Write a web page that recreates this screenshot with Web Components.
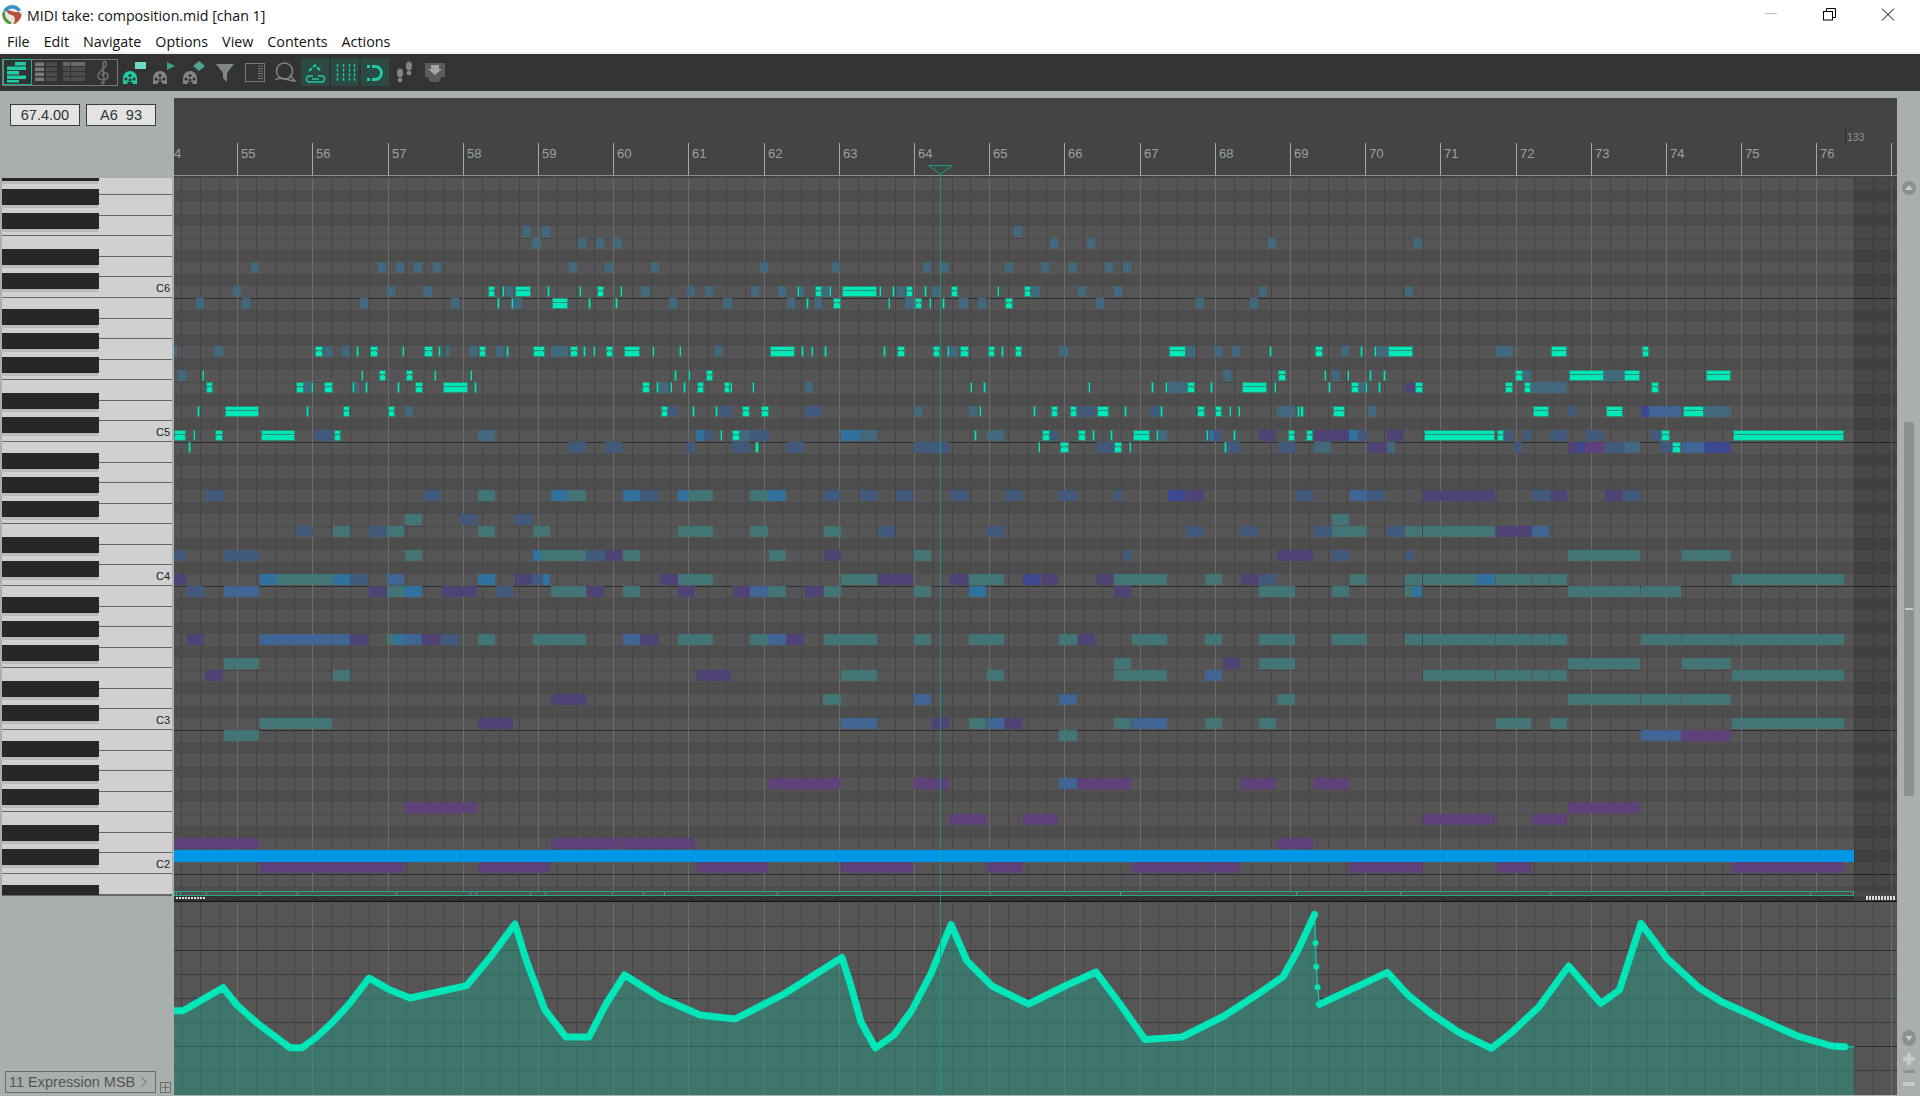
<!DOCTYPE html>
<html>
<head>
<meta charset="utf-8">
<title>MIDI take: composition.mid [chan 1]</title>
<style>
    html, body { margin: 0; background: #a9aeae; }
</style>
</head>
<body>
<midi-window></midi-window>

<script>
const UI_FONT = `"Open Sans", "Noto Sans", sans-serif`
const LABEL_FONT = `"Liberation Sans", Arial, sans-serif`

const MEASURE_0 = 237.3
const MEASURE_W = 75.19
const ROW_H = 12
const ITEM_END = 1854
const CANVAS_END = 1897

const measureX = (m) => MEASURE_0 + MEASURE_W * (m - 55)
const rowY = (r) => 286 + ROW_H * r
const isBlackRow = (r) => [2, 4, 6, 9, 11].includes(((r % 12) + 12) % 12)

const NOTE_COLORS = {
    a: "#3f6a82",
    t: "#41797b",
    b: "#3f5b80",
    B: "#3e669a",
    p: "#4f417a",
    P: "#5f3f7c",
    c: "#2c74a6",
    d: "#3a4898",
}

// Notes per row (0 = the C6 row). Spans are measured at the given x origin and scale.
const NOTE_BLOCKS = [
    { x: 170, sx: 2.8, color: "S", rows: {
        0: "889-911 929-935 966-1012 1056-1064 1145-1151 1195-1216 1260-1266",
        1: "915-925 955-960 1069-1115 1170-1180 1245-1254",
        5: "405-427 520-530 559-581 650-656 710-735 750-759 864-886 941-949 1015-1051 1119-1141 1155-1165 1184-1190 1220-1241 1270-1317 1350-1355 1425-1431",
        7: "89-95 535-540 584-606 660-681 739-745 840-846 1410-1420 1450-1456 1500-1521",
        8: "100-121 354-376 395-400 430-455 510-516 545-554 636-644 685-707 763-835 850-860 1321-1345 1360-1369 1400-1406 1436-1445 1475-1496 1550-1568",
        10: "76-85 153-250 380-389 483-505 609-631 1374-1395 1462-1470 1526-1534",
        12: "10-46 64-70 125-149 255-351 458-480 1540-1546",
        13: "50-60",
    } },
    { x: 170, sx: 2.8, color: "a", rows: {
        "-5": "988-1011 1041-1064",
        "-4": "1014-1040 1141-1165 1193-1216 1242-1266",
        "-2": "227-250 582-606 633-656 683-706 735-759 1117-1139 1218-1241 1347-1370",
        0: "176-199 608-630 708-734 937-960 1319-1345 1447-1470 1498-1520",
        1: "73-96 201-224 532-555 787-809 960-986 1397-1420 1547-1568",
        5: "10-20 124-149 430-454 481-505 770-784 837-860 913-936 1067-1115 1525-1546",
        7: "22-46",
        8: "376-395 516-530 1370-1394",
        10: "658-680 b1395-1420 b1538-1568",
        12: "b404-454 862-910 c1473-1496 b1496-1520",
        13: "b1117-1165 b1218-1266 b1447-1469",
    } },
    { x: 730, sx: 2.75, color: "S", rows: {
        0: "184-190 233-254 272-278 308-404 410-415 446-454 483-504 534-542 607-628 734-740 808-829",
        1: "208-217 282-304 434-440 508-529 546-553 583-592 757-779",
        5: "109-180 195-204 223-229 258-267 421-429 458-480 557-578 597-603 632-656 709-730 745-754 783-804 1207-1254 1483-1491",
        7: "1507-1530",
        8: "0-5 60-66 660-666 696-704 985-991 1158-1166 1196-1202 1258-1280 1320-1329 1407-1478 1496-1502",
        10: "32-56 84-106 685-690 834-842 882-903 934-955 1009-1041 1084-1092 1183-1191 1284-1305 1333-1354 1373-1378 1397-1403 1560-1568",
        12: "6-28 671-679 857-879 958-980 995-1003 1045-1053 1108-1154 1171-1177 1308-1314 1384-1392 1534-1555",
        13: "70-80 846-853 907-931 1057-1079 1097-1103 1358-1366",
    } },
    { x: 730, sx: 2.75, color: "a", rows: {
        "-5": "781-803",
        "-4": "880-902 982-1004 1480-1502",
        "-2": "83-105 281-303 531-553 578-602 756-778 856-878 933-955 1032-1054 1081-1103",
        0: "58-80 132-154 190-204 254-272 458-480 556-579 829-853 957-979 1056-1078 1455-1477",
        1: "0-3 157-179 231-253 480-505 630-655 682-704 1007-1029 1282-1304 1430-1452",
        5: "603-627 905-930 1256-1280 1332-1354 1380-1403",
        7: "1356-1378",
        8: "206-228 1202-1256",
        10: "b0-3 b206-253 506-528 657-680 b957-1005 b1156-1183 1505-1555",
        12: "28-55 b55-106 c306-355 355-403 707-754 b879-902 1177-1201 c1316-1330 b1330-1354 p1455-1502",
        13: "b5-55 b157-204 b506-602 b1008-1057 b1370-1403 b1506-1553",
    } },
    { x: 1300, sx: 2.75, color: "S", rows: {
        5: "40-62 165-173 204-210 241-311 690-735 940-961",
        7: "65-72 129-135 190-198 228-237 590-612 739-836 890-936 1116-1186",
        8: "77-85 139-161 179-184 215-223 315-337 565-587 615-636 966-988",
        10: "0-12 90-125 640-686 841-887 1053-1112",
        12: "16-37 340-537 541-562 992-1018 1190-1497",
        13: "1022-1049",
    } },
    { x: 1300, sx: 2.75, color: "a", rows: {
        "-4": "314-336",
        0: "290-311",
        5: "113-135 210-241 540-586",
        7: "87-110 612-635 836-890",
        8: "161-179 p290-315 636-733",
        10: "187-209 b738-760 d938-960 B960-1048 1112-1186",
        12: "p38-135 c135-160 b160-183 p240-285 b563-586 b613-636 b687-733 b787-836 b964-992",
        13: "38-85 p187-238 238-261 b590-611 p738-762 d762-785 P785-836 b838-890 890-935 b990-1022 B1050-1112 d1112-1186",
    } },
    { x: 170, sx: 2.24, color: "t", rows: {
        17: "b78-120 b568-608 690-728 c853-892 892-932 c1015-1053 b1053-1095 c1138-1158 1158-1216 1300-1340 c1340-1380 b1464-1502",
        19: "526-564 b650-688 b772-810",
        20: "b282-320 365-403 b446-485 486-524 690-728 812-851 1138-1216 1300-1340 1464-1502",
        22: "b8-36 b122-200 526-564 c812-830 830-932 b932-974 p974-1013 1015-1053 1342-1380 p1464-1502",
        24: "p8-36 c202-240 240-365 c365-404 b404-444 B486-524 c690-728 p772-811 b811-835 c835-851 p1098-1137 1138-1216 1502-1545",
        25: "b38-76 B122-200 p446-485 486-525 c525-564 p610-688 b730-768 853-932 p933-972 1015-1053 p1138-1176 p1260-1300 B1300-1340 1340-1380 p1422-1462 1464-1502",
        29: "p38-76 B202-362 B365-404 p404-444 486-505 c505-525 B525-564 p564-608 b610-648 690-728 812-932 B1015-1053 p1053-1095 1138-1216 1300-1340 B1340-1380 p1380-1420 1464-1545",
        31: "122-200",
        32: "p78-119 365-403 p1178-1257 1503-1545",
        34: "p853-932 1463-1502",
        36: "202-362 p690-768 B1503-1545",
        37: "122-200",
        41: "P1342-1502",
        43: "P526-688",
        46: "P8-200 P853-1012 P1015-1175",
        48: "P202-524 P690-851 P1178-1340 P1503-1545",
    } },
    { x: 860, sx: 3, color: "t", rows: {
        17: "b0-52 b108-160 b270-324 b436-486 b598-652 b762-786 d924-978 p981-1032 b1308-1360 B1470-1522 b1522-1530",
        19: "1416-1468",
        20: "b53-106 b381-432 b981-1032 b1144-1194 b1362-1416 1416-1522",
        22: "162-213 b789-813 p1251-1359 b1416-1468",
        24: "0-52 p53-160 p270-324 327-432 d490-540 p543-594 p708-760 762-922 1035-1086 p1144-1194 b1197-1248 1470-1522",
        25: "162-213 c327-378 p762-813 1197-1305 1416-1468",
        29: "0-52 162-213 327-432 598-652 p653-705 816-921 1035-1086 1197-1305 1416-1522",
        31: "762-813 p1090-1140 1197-1305",
        32: "0-52 381-432 762-922 B1035-1086",
        34: "B162-213 B598-652 1251-1305",
        36: "B0-52 p216-267 327-378 B381-432 p436-486 762-813 B816-921 1035-1086 1197-1248",
        37: "598-652",
        41: "P162-267 B598-652 P652-813 P1144-1248 P1362-1468",
        44: "P270-378 P490-594",
        46: "P1251-1359",
        48: "P0-160 P381-486 P816-1032 P1035-1140 P1470-1530",
    } },
    { x: 1370, sx: 3, color: "t", rows: {
        17: "b0-46 p160-375 b486-540 p540-591 p705-756 b760-810",
        20: "b52-103 105-156 160-375 p378-486 B486-537",
        22: "b106-130 594-810 936-1083",
        24: "105-156 160-322 c322-375 378-483 486-537 540-591 1086-1422",
        25: "105-130 c130-156 594-810 813-933",
        29: "105-156 160-375 378-483 486-537 540-591 813-933 936-1083 1086-1422",
        31: "594-810 936-1083",
        32: "160-375 378-483 486-537 540-591 1086-1422",
        34: "594-810 813-933 936-1083",
        36: "378-483 540-591 1086-1422",
        37: "B813-933 P933-1083",
        43: "P594-810",
        44: "P160-375 P486-591",
        48: "P0-156 P378-483 P1086-1422",
    } },
]

const CC_RISE = [
    [174, 1010.7], [183, 1010.7], [223, 987.7], [237, 1005], [257, 1023], [290, 1047.7], [302, 1047.7],
    [317, 1036.7], [333, 1021.7], [350, 1003], [369, 978], [390, 990], [410, 998], [466.5, 985.7], [490, 957.6], [515, 924],
    [526.5, 961], [545, 1010], [566, 1037], [589, 1037], [606, 1004], [624.5, 975], [661, 998], [700, 1015], [735, 1019],
    [784, 994], [842, 957.5], [851, 986], [861, 1022], [875.5, 1048], [894, 1035], [912, 1010], [931, 973.5], [951, 924.5],
    [967, 961], [992, 986], [1028.5, 1004], [1065, 986], [1096, 972], [1120, 1004], [1145, 1039.6], [1182, 1037], [1224, 1016],
    [1261, 992], [1283, 976.7], [1298, 950], [1314.6, 914.3],
]
const CC_DROP = [[1314.6, 914.3], [1315.5, 943], [1316.3, 966.7], [1317.6, 987.3], [1319.4, 1004.3]]
const CC_FALL = [
    [1319.4, 1004.3], [1387.4, 972.3], [1408, 995], [1430.8, 1013.3], [1460, 1033], [1491.5, 1048.3], [1511, 1033], [1539, 1006.7],
    [1568.7, 966], [1600.8, 1003.3], [1619.4, 990], [1641, 923.3], [1667, 958.3], [1699.7, 988.3], [1722, 1002],
    [1747.3, 1013.3], [1775, 1026], [1799.4, 1036.7], [1832, 1046], [1845, 1046.7],
]

const pts = (list) => list.map((p) => p.join(",")).join(" ")

function beatLines(top, bottom) {
    let out = ""
    for (let x = MEASURE_0 - MEASURE_W; x < CANVAS_END; x += MEASURE_W / 4) {
        const beat = Math.round((x - MEASURE_0) / (MEASURE_W / 4))
        const left = Math.round(x)
        if (left < 174) continue
        const strong = ((beat % 4) + 4) % 4 == 0
        out += `<rect x="${left}" y="${top}" width="1" height="${bottom - top}" fill="${strong ? "#6c6c6c" : "#454545"}"/>`
    }
    return out
}

function noteRect(x0, x1, row, color) {
    const y = rowY(row)
    const w = Math.max(x1 - x0, 2)
    if (color != "S") {
        return `<rect x="${x0}" y="${y}" width="${w}" height="11" fill="${NOTE_COLORS[color]}" opacity=".9"/>`
    }
    let out = `<rect x="${x0}" y="${y}" width="${w}" height="11" fill="#2d8a78"/>`
    out += `<rect x="${x0 + 1}" y="${y + 1}" width="${Math.max(w - 2, 1)}" height="9" fill="#00e8b8"/>`
    if (w > 5) {
        out += `<rect x="${x0 + 1}" y="${y + 4}" width="${w - 2}" height="1" fill="#2d8a78"/>`
        if (w < 14) {
            out += `<rect x="${x0 + 1}" y="${y + 5}" width="1" height="1" fill="#2d8a78"/>`
            out += `<rect x="${x0 + w - 2}" y="${y + 5}" width="1" height="1" fill="#2d8a78"/>`
        }
    }
    return out
}

function notesSvg() {
    let faded = ""
    let selected = ""
    for (const block of NOTE_BLOCKS) {
        for (const [row, spans] of Object.entries(block.rows)) {
            for (const m of spans.matchAll(/([a-zA-Z])?(\d+)-(\d+)/g)) {
                const x0 = Math.round(block.x + Number(m[2]) / block.sx)
                const x1 = Math.round(block.x + Number(m[3]) / block.sx)
                const color = m[1] || block.color
                if (color == "S") selected += noteRect(x0, x1, Number(row), color)
                else faded += noteRect(x0, x1, Number(row), color)
            }
        }
    }
    return faded + selected
}

class MidiWindow extends HTMLElement {
    constructor() {
        super()
        this.attachShadow({ mode: "open" })
        this.shadowRoot.innerHTML = `
            <style>
                :host { display: flex; flex-direction: column; width: 1920px; height: 1096px; overflow: hidden; background: #a9aeae; }
            </style>
            <title-bar>MIDI take: composition.mid [chan 1]</title-bar>
            <menu-bar></menu-bar>
            <tool-strip></tool-strip>
            <editor-body></editor-body>
        `
    }
}

class TitleBar extends HTMLElement {
    constructor() {
        super()
        this.attachShadow({ mode: "open" })
        this.shadowRoot.innerHTML = `
            <style>
                :host { display: flex; align-items: center; height: 30px; background: #fff; color: #111; font: 14.2px ${UI_FONT}; }
                .logo { margin: -2px 5px 0 2px; flex: none; }
                .title { flex: 1; white-space: nowrap; }
                .controls { display: flex; }
                .controls svg { display: block; width: 58px; height: 30px; }
            </style>
            <svg class="logo" width="20" height="20" viewBox="1 4.5 18 18">
                <circle cx="10" cy="13.5" r="9" fill="#e9e4dc"/>
                <path d="M2 11 A9 9 0 0 1 18 10 L15.5 11 A7 7 0 0 0 4.5 11.5 Z" fill="#2f8fd0"/>
                <path d="M1.2 14 A9 9 0 0 0 9 23 L9.5 21 C5 19 3 15 4 12 L1.6 11.5 Z" fill="#4f9a45"/>
                <path d="M5 10 C9 10 11 13 16 11.5 L18.6 14 C18 18 15 22 11 23 C13.5 19 13 15 9.5 14.5 C7 14 5.5 12 5 10 Z" fill="#b4503f"/>
            </svg>
            <span class="title"><slot></slot></span>
            <div class="controls">
                <svg viewBox="0 0 58 30"><rect x="19" y="13" width="12" height="1" fill="#bcbcbc"/></svg>
                <svg viewBox="0 0 58 30" fill="none" stroke="#000"><rect x="19.5" y="11.5" width="9" height="8.5"/><path d="M22.5 11.5 V8.5 H31.5 V17.5 H28.5"/></svg>
                <svg viewBox="0 0 58 30" fill="none" stroke="#000"><path d="M20 8.5 L32 20.5 M32 8.5 L20 20.5"/></svg>
            </div>
        `
    }
}

class MenuBar extends HTMLElement {
    constructor() {
        super()
        this.attachShadow({ mode: "open" })
        const items = ["File", "Edit", "Navigate", "Options", "View", "Contents", "Actions"]
        this.shadowRoot.innerHTML = `
            <style>
                :host { display: flex; align-items: center; gap: 14px; height: 22px; padding-left: 7px; background: #fff; color: #111; font: 14.3px ${UI_FONT}; border-bottom: 2px solid #f0f0f0; }
            </style>
            ${items.map((item) => `<span>${item}</span>`).join("")}
        `
    }
}

const DIN = (fill) => `
    <path d="M3 26 V20 A7 7 0 0 1 17 20 V26 H12.5 V24 H7.5 V26 Z" fill="${fill}"/>
    <g fill="#333"><circle cx="6" cy="21" r="1.6"/><circle cx="14" cy="21" r="1.6"/><circle cx="10" cy="17.5" r="1.6"/><circle cx="10" cy="22" r="1.6"/></g>`
const TEAL = "#1ecba4"
const GRAY = "#7f8886"

const ICONS = {
    notes: `<g fill="${TEAL}">
        <rect x="12" y="3" width="11" height="3.5"/><rect x="4" y="7.5" width="19" height="3.5"/>
        <rect x="4" y="12" width="12" height="3.5"/><rect x="4" y="16.5" width="19" height="3.5"/><rect x="4" y="21" width="12" height="2.5"/></g>`,
    named: [3, 8, 13, 18].map((y) => `<rect x="3" y="${y + 0.5}" width="9" height="3.5" fill="#7a7a7a"/><rect x="14" y="${y + 0.5}" width="11" height="3.5" fill="#4c4c4c"/>`).join(""),
    events: [3, 8, 13, 18].map((y, i) => [3, 11, 18].map((x) => `<rect x="${x}" y="${y}" width="7" height="4" fill="${i == 0 ? "#6a6a6a" : "#4c4c4c"}"/>`).join("")).join(""),
    clef: `<path d="M15 24 L14 5 C14 1 18 2 17 6 C16 10 9 12 9 17 C9 22 19 22 19 17 C19 13 13 13 13 17" fill="none" stroke="#6d6d6d" stroke-width="1.6"/><circle cx="13.5" cy="24" r="1.6" fill="#6d6d6d"/>`,
    dinRect: `${DIN(TEAL)}<rect x="15" y="4" width="11" height="7" fill="#6edac8"/>`,
    dinPlay: `${DIN(GRAY)}<path d="M17 4 L25 8 L17 12 Z" fill="#3f9c8a"/>`,
    dinDiamond: `${DIN(GRAY)}<path d="M19 3 L25 8 L19 13 L13 8 Z" fill="#4fa392"/>`,
    filter: `<path d="M6 6 H24 L17 15 V24 L13 20 V15 Z" fill="${GRAY}"/>`,
    lanes: `<rect x="5.5" y="5.5" width="19" height="18" fill="none" stroke="#777"/><path d="M18 8 H23 M18 10.5 H23 M18 13 H23 M18 15.5 H23 M18 18 H23 M18 20.5 H23" stroke="#777"/>`,
    quantize: `<circle cx="14.5" cy="13" r="8" fill="none" stroke="${GRAY}" stroke-width="1.5"/><path d="M5 22 C10 18 16 22 25 23 L20 17" fill="none" stroke="${GRAY}" stroke-width="1.4"/>`,
    link: `<path d="M9 13 L15 7.5 L21 13" fill="none" stroke="${TEAL}" stroke-width="2.2" stroke-dasharray="4 1.5"/>
        <path d="M13 18 H9.5 A3 3 0 0 0 9.5 24 H21.5 A3 3 0 0 0 21.5 18 H18 M12 21 H19" fill="none" stroke="${TEAL}" stroke-width="1.3"/>`,
    gridDots: `<path d="M7.5 6 V23 M13.5 6 V23 M19.5 6 V23 M24.5 6 V23" fill="none" stroke="${TEAL}" stroke-width="1.4" stroke-dasharray="3 1.6"/>`,
    snap: `<path d="M12 8.5 H15 A6.5 6.5 0 0 1 15 21.5 H12" fill="none" stroke="${TEAL}" stroke-width="3"/><rect x="7" y="7" width="3" height="3" fill="${TEAL}"/><rect x="7" y="20" width="3" height="3" fill="${TEAL}"/>`,
    steps: `<g fill="${GRAY}"><ellipse cx="10" cy="15" rx="3" ry="4.6"/><ellipse cx="10" cy="22" rx="2.4" ry="2.2"/><ellipse cx="19" cy="8" rx="3" ry="4.6"/><ellipse cx="19" cy="15" rx="2.4" ry="2.2"/></g>`,
    dropIn: `<path d="M5 5 H25 V19 L21 19 L19 24 H10 L8 19 H5 Z" fill="#5c5c5c"/><path d="M11 7 H19 V11 H22 L15 17 L8 11 H11 Z" fill="#a0a6a4"/>`,
}

class ToolButton extends HTMLElement {
    constructor() {
        super()
        this.attachShadow({ mode: "open" })
        const active = this.hasAttribute("active")
        const grouped = this.hasAttribute("grouped")
        const icon = ICONS[this.getAttribute("icon") || ""] || ""
        const w = grouped ? 28.5 : 30
        const h = grouped ? 26 : 28
        this.shadowRoot.innerHTML = `
            <style>
                :host { display: block; width: ${w}px; height: ${h}px; flex: none; box-sizing: border-box; }
                svg { display: block; overflow: visible; }
            </style>
            <svg width="${w}" height="${h}" viewBox="0 0 ${w} ${h}">
                ${active ? `<rect x="1" width="28" height="28" fill="#2c4a44"/>` : ""}
                ${icon}
            </svg>
        `
    }
}

class ToolStrip extends HTMLElement {
    constructor() {
        super()
        this.attachShadow({ mode: "open" })
        this.shadowRoot.innerHTML = `
            <style>
                :host { display: flex; align-items: flex-start; height: 33px; padding: 4px 0 0 2px; background: #333; flex: none; }
                .group { display: flex; margin: 1px 2px 0 0; border: 1px solid #777; height: 24.5px; position: relative; }
                .group tool-button:first-child { outline: 1px solid #1db394; outline-offset: -1px; }
                .group tool-button { margin-top: -0.75px; }
            </style>
            <div class="group">
                <tool-button grouped icon="notes"></tool-button>
                <tool-button grouped icon="named"></tool-button>
                <tool-button grouped icon="events"></tool-button>
                <tool-button grouped icon="clef"></tool-button>
            </div>
            <tool-button icon="dinRect"></tool-button>
            <tool-button icon="dinPlay"></tool-button>
            <tool-button icon="dinDiamond"></tool-button>
            <tool-button icon="filter"></tool-button>
            <tool-button icon="lanes"></tool-button>
            <tool-button icon="quantize"></tool-button>
            <tool-button icon="link" active></tool-button>
            <tool-button icon="gridDots" active></tool-button>
            <tool-button icon="snap" active></tool-button>
            <tool-button icon="steps"></tool-button>
            <tool-button icon="dropIn"></tool-button>
        `
    }
}

class EditorBody extends HTMLElement {
    constructor() {
        super()
        this.attachShadow({ mode: "open" })
        this.shadowRoot.innerHTML = `
            <style>
                :host {
                    display: grid;
                    position: relative;
                    grid-template-columns: 174px 1723px 23px;
                    grid-template-rows: 87px 718px 6px 193px 1px;
                    flex: none;
                }
                .readouts { display: flex; gap: 6px; padding: 13px 0 0 10px; align-items: flex-start; }
                time-ruler { grid-column: 2; grid-row: 1; }
                piano-keys { grid-column: 1; grid-row: 2; }
                note-grid { grid-column: 2; grid-row: 2; }
                lane-divider { grid-column: 2; grid-row: 3; }
                cc-lane { grid-column: 2; grid-row: 4; }
                cc-selector { grid-column: 1; grid-row: 3 / 5; }
                scroll-rail { grid-column: 3; grid-row: 1 / 6; }
                play-cursor { position: absolute; left: 928px; top: 74px; }
            </style>
            <div class="readouts">
                <position-box>67.4.00</position-box>
                <position-box>A6&nbsp;&nbsp;93</position-box>
            </div>
            <time-ruler></time-ruler>
            <piano-keys></piano-keys>
            <note-grid></note-grid>
            <lane-divider></lane-divider>
            <cc-selector>11 Expression MSB</cc-selector>
            <cc-lane></cc-lane>
            <scroll-rail></scroll-rail>
            <play-cursor></play-cursor>
        `
    }
}

class PositionBox extends HTMLElement {
    constructor() {
        super()
        this.attachShadow({ mode: "open" })
        this.shadowRoot.innerHTML = `
            <style>
                :host { display: flex; align-items: center; justify-content: center; width: 70px; height: 22px; box-sizing: border-box; background: #e2e4e4; border: 1px solid #3c3c3c; color: #333; font: 14.5px ${LABEL_FONT}; white-space: nowrap; }
            </style>
            <slot></slot>
        `
    }
}

class TimeRuler extends HTMLElement {
    constructor() {
        super()
        this.attachShadow({ mode: "open" })
        let marks = `<text x="174" y="158" class="bar">4</text>`
        for (let m = 55; m <= 77; m++) {
            const x = Math.round(measureX(m))
            marks += `<rect x="${x}" y="143" width="1" height="32" fill="#a8a8a8"/>`
            if (m < 77) marks += `<text x="${x + 4}" y="158" class="bar">${m}</text>`
        }
        this.shadowRoot.innerHTML = `
            <style>
                :host { display: block; margin-top: 7px; height: 80px; background: #444; overflow: hidden; }
                svg { display: block; }
                .bar { font: 13px ${LABEL_FONT}; fill: #9aa2a2; }
                .tempo { font: 10.5px ${LABEL_FONT}; fill: #8d9595; }
            </style>
            <svg width="1723" height="80" viewBox="174 98 1723 80">
                ${marks}
                <rect x="174" y="175" width="1723" height="1" fill="#8f8f8f"/>
                <rect x="1845" y="128" width="1" height="16" fill="#2e2e2e"/>
                <text x="1847" y="141" class="tempo">133</text>
            </svg>
        `
    }
}

class PianoKeys extends HTMLElement {
    constructor() {
        super()
        this.attachShadow({ mode: "open" })
        let lines = ""
        const whiteKey = 144 / 7
        for (let i = -6; i < 36; i++) {
            const y = Math.round(297 + i * whiteKey)
            if (y >= 178 && y < 895) lines += `<rect x="2" y="${y}" width="170" height="1" fill="#666"/>`
        }
        let keys = ""
        for (let r = -10; r < 52; r++) {
            if (!isBlackRow(r)) continue
            keys += `<rect x="2" y="${rowY(r) + 15}" width="96" height="3" fill="#bbb"/>`
            keys += `<rect x="2" y="${rowY(r) - 1}" width="97" height="16" fill="#262827"/>`
        }
        const labels = [6, 5, 4, 3, 2].map((oct, i) => `<text x="170" y="${292 + 144 * i}" text-anchor="end">C${oct}</text>`).join("")
        this.shadowRoot.innerHTML = `
            <style>
                :host { display: block; height: 718px; overflow: hidden; }
                svg { display: block; }
                text { font: 11px ${LABEL_FONT}; fill: #222; }
            </style>
            <svg width="172" height="718" viewBox="0 178 172 718">
                <rect x="2" y="178" width="170" height="718" fill="#d0d0d0"/>
                ${lines}
                ${keys}
                <rect x="2" y="895" width="170" height="1" fill="#666"/>
                ${labels}
            </svg>
        `
    }
}

class NoteGrid extends HTMLElement {
    constructor() {
        super()
        this.attachShadow({ mode: "open" })
        let bands = ""
        for (let r = -9; r < 51; r++) {
            const y = rowY(r)
            if (y >= 891) break
            const h = Math.min(ROW_H, 891 - y)
            bands += `<rect x="174" y="${y}" width="1723" height="${h}" fill="${isBlackRow(r) ? "#4d4d4d" : "#555"}"/>`
        }
        let rules = ""
        for (let i = 0; i < 5; i++) {
            rules += `<rect x="174" y="${298 + 144 * i}" width="1723" height="1" fill="#2c2c2c"/>`
            rules += `<rect x="174" y="${238 + 144 * i}" width="1723" height="1" fill="#484848"/>`
        }
        let boxTicks = ""
        for (const x of [176, 180, 206, 259, 297, 396, 470, 476, 530, 545, 612, 643, 664, 777, 990, 1120, 1296, 1400, 1550, 1702, 1810]) {
            boxTicks += `<rect x="${x}" y="892" width="1" height="3" fill="#2fa68a"/>`
        }
        this.shadowRoot.innerHTML = `
            <style>
                :host { display: block; height: 718px; overflow: hidden; }
                svg { display: block; }
            </style>
            <svg width="1723" height="718" viewBox="174 178 1723 718" shape-rendering="crispEdges">
                <rect x="174" y="176" width="1723" height="720" fill="#484848"/>
                ${bands}
                ${rules}
                ${beatLines(178, 891)}
                ${notesSvg()}
                <rect x="174" y="850" width="${ITEM_END - 174}" height="12" fill="#0096e6"/>
                <rect x="${ITEM_END}" y="178" width="${CANVAS_END - ITEM_END}" height="713" fill="#000" opacity=".16"/>
                <rect x="174" y="891" width="${ITEM_END - 174}" height="5" fill="#2fa68a"/>
                <rect x="175" y="892" width="${ITEM_END - 176}" height="3" fill="#4e4e4e"/>
                ${boxTicks}
            </svg>
        `
    }
}

class LaneDivider extends HTMLElement {
    constructor() {
        super()
        this.attachShadow({ mode: "open" })
        const dots = (x0, y, n) => Array.from({ length: n }, (_, i) => `<rect x="${x0 + i * 3}" y="${y}" width="2" height="2" fill="#ddd"/>`).join("")
        this.shadowRoot.innerHTML = `
            <style>
                :host { display: block; height: 6px; overflow: hidden; background: #333; }
                svg { display: block; overflow: visible; }
            </style>
            <svg width="1723" height="6" viewBox="174 896 1723 6" shape-rendering="crispEdges">
                ${dots(176, 897, 10)}
                <rect x="1854" y="896" width="43" height="5" fill="#3f3f3f"/>
                ${dots(1866, 896, 10)}
                ${dots(1866, 898, 10)}
                <rect x="174" y="901" width="1723" height="1" fill="#111"/>
            </svg>
        `
    }
}

class CcLane extends HTMLElement {
    constructor() {
        super()
        this.attachShadow({ mode: "open" })
        const fillPoints = [...CC_RISE, ...CC_DROP.slice(1), ...CC_FALL.slice(1), [ITEM_END, 1046.7], [ITEM_END, 1095], [174, 1095]]
        const rules = [[926, "#3f3f3f"], [950, "#2a2a2a"], [974, "#3f3f3f"], [998, "#2c3c4c"], [1022, "#3f3f3f"], [1046, "#2a2a2a"], [1070, "#3f3f3f"]]
        const dots = CC_DROP.slice(1, 4).map(([x, y]) => `<circle cx="${x}" cy="${y}" r="3" fill="#00e6b8"/>`).join("")
        this.shadowRoot.innerHTML = `
            <style>
                :host { display: block; height: 193px; overflow: hidden; background: #555; }
                svg { display: block; }
            </style>
            <svg width="1723" height="193" viewBox="174 902 1723 193">
                ${rules.map(([y, c]) => `<rect x="174" y="${y}" width="1723" height="1" fill="${c}"/>`).join("")}
                ${beatLines(902, 1095)}
                <polygon points="${pts(fillPoints)}" fill="#2a9783" opacity=".5"/>
                <polyline points="${pts(CC_DROP)}" fill="none" stroke="#00e6b8" stroke-width="1"/>
                ${dots}
                <polyline points="${pts(CC_RISE)}" fill="none" stroke="#00e6b8" stroke-width="7" stroke-linejoin="round" stroke-linecap="round"/>
                <polyline points="${pts(CC_FALL)}" fill="none" stroke="#00e6b8" stroke-width="7" stroke-linejoin="round" stroke-linecap="round"/>
                <path d="M1845 1046.7 H${ITEM_END}" stroke="#00e6b8"/>
            </svg>
        `
    }
}

class CcSelector extends HTMLElement {
    constructor() {
        super()
        this.attachShadow({ mode: "open" })
        this.shadowRoot.innerHTML = `
            <style>
                :host { display: flex; align-items: flex-end; gap: 4px; padding: 0 0 2px 5px; font: 14.5px ${LABEL_FONT}; color: #555; }
                .box { display: flex; align-items: center; justify-content: space-between; width: 151px; height: 22px; box-sizing: border-box; padding: 0 8px 0 3px; border: 1px solid #6c6c6c; white-space: nowrap; }
                svg { display: block; flex: none; }
            </style>
            <div class="box">
                <span><slot></slot></span>
                <svg width="6" height="10" viewBox="0 0 6 10" fill="none" stroke="#666"><path d="M.5 .5 L5.5 5 L.5 9.5"/></svg>
            </div>
            <svg width="11" height="11" viewBox="0 0 11 11" fill="none" stroke="#6c6c6c"><rect x=".5" y=".5" width="10" height="10"/><path d="M5.5 2 V9 M2 5.5 H9"/></svg>
        `
    }
}

class ScrollRail extends HTMLElement {
    constructor() {
        super()
        this.attachShadow({ mode: "open" })
        this.shadowRoot.innerHTML = `
            <style>
                :host { display: flex; flex-direction: column; align-items: center; padding: 90px 0 0; }
                svg { display: block; flex: none; }
                .thumb { width: 10px; height: 374px; margin-top: 227px; background: #8b9090; border-radius: 2px; display: flex; align-items: center; justify-content: center; }
                .thumb i { display: block; width: 8px; height: 2px; background: #c6caca; }
                .controls { margin-top: auto; display: flex; flex-direction: column; align-items: center; padding-bottom: 10px; }
                .plus { margin-top: 7.5px; }
                .less { margin-top: 4.5px; }
                .least { margin-top: 9.5px; }
            </style>
            <svg width="14" height="14" viewBox="0 0 14 14"><circle cx="7" cy="7" r="7" fill="#8b9090"/><path d="M3 9 H11 L7 4 Z" fill="#c6caca"/></svg>
            <div class="thumb"><i></i></div>
            <div class="controls">
                <svg width="14" height="16" viewBox="0 0 14 16"><ellipse cx="7" cy="8" rx="7" ry="8" fill="#8b9090"/><path d="M3.5 6 H10.5 L7 11 Z" fill="#c6caca"/></svg>
                <svg class="plus" width="12" height="12" viewBox="0 0 12 12" fill="#c6caca"><path d="M4 0 H8 V4 H12 V8 H8 V12 H4 V8 H0 V4 H4 Z"/></svg>
                <svg class="less" width="12" height="3" viewBox="0 0 12 3"><rect width="12" height="3" fill="#8b9090"/></svg>
                <svg class="least" width="12" height="4" viewBox="0 0 12 4"><rect width="12" height="4" fill="#c6caca"/></svg>
            </div>
        `
    }
}

class PlayCursor extends HTMLElement {
    constructor() {
        super()
        this.attachShadow({ mode: "open" })
        this.shadowRoot.innerHTML = `
            <style>
                :host { display: block; width: 25px; height: 1022px; pointer-events: none; }
                svg { display: block; }
            </style>
            <svg width="25" height="1022" viewBox="0 0 25 1022">
                <rect x="12" y="8" width="1" height="1014" fill="#1a9e8a" opacity=".85"/>
                <path d="M.5 .5 H24.5 L12.5 9.5 Z" fill="#3c4a48" stroke="#1a9e8a"/>
            </svg>
        `
    }
}

customElements.define("title-bar", TitleBar)
customElements.define("menu-bar", MenuBar)
customElements.define("tool-button", ToolButton)
customElements.define("tool-strip", ToolStrip)
customElements.define("position-box", PositionBox)
customElements.define("time-ruler", TimeRuler)
customElements.define("piano-keys", PianoKeys)
customElements.define("note-grid", NoteGrid)
customElements.define("lane-divider", LaneDivider)
customElements.define("cc-lane", CcLane)
customElements.define("cc-selector", CcSelector)
customElements.define("scroll-rail", ScrollRail)
customElements.define("play-cursor", PlayCursor)
customElements.define("editor-body", EditorBody)
customElements.define("midi-window", MidiWindow)
</script>
</body>
</html>
